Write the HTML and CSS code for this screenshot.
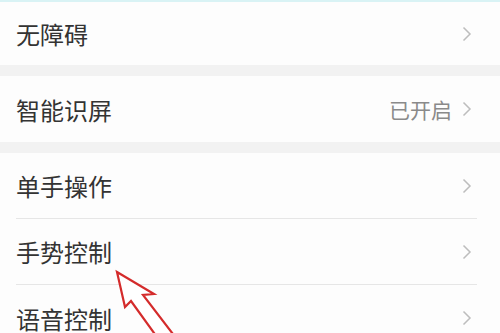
FILE: index.html
```html
<!DOCTYPE html>
<html lang="zh-CN">
<head>
    <meta charset="UTF-8">
    <meta name="viewport" content="width=device-width, initial-scale=1.0">
    <link rel="stylesheet" href="styles.css">
</head>
<body>
    <div class="screen">
        <div class="group first">
            <div class="row">
                <span class="label">无障碍</span>
                <span class="chevron"><svg width="10" height="16" viewBox="0 0 10 16"><polyline points="1.5,1.5 8,8 1.5,14.5" /></svg></span>
            </div>
        </div>
        <div class="group">
            <div class="row">
                <span class="label">智能识屏</span>
                <span class="value">已开启</span>
                <span class="chevron"><svg width="10" height="16" viewBox="0 0 10 16"><polyline points="1.5,1.5 8,8 1.5,14.5" /></svg></span>
            </div>
        </div>
        <div class="group">
            <div class="row">
                <span class="label">单手操作</span>
                <span class="chevron"><svg width="10" height="16" viewBox="0 0 10 16"><polyline points="1.5,1.5 8,8 1.5,14.5" /></svg></span>
            </div>
            <div class="row">
                <span class="label">手势控制</span>
                <span class="chevron"><svg width="10" height="16" viewBox="0 0 10 16"><polyline points="1.5,1.5 8,8 1.5,14.5" /></svg></span>
            </div>
            <div class="row">
                <span class="label">语音控制</span>
                <span class="chevron"><svg width="10" height="16" viewBox="0 0 10 16"><polyline points="1.5,1.5 8,8 1.5,14.5" /></svg></span>
            </div>
        </div>

        <svg class="pointer" width="500" height="333" viewBox="0 0 500 333">
            <polygon points="117,272 154,294 143,295 176,338 162,344 131,301 125,307" />
        </svg>
    </div>
</body>
</html>
```

FILE: styles.css
```css
body {
    margin: 0;
    padding: 0;
    background-color: #f2f2f2;
    font-family: "Noto Sans CJK SC", "Noto Sans", sans-serif;
}
.screen {
    position: relative;
    width: 500px;
    height: 333px;
    overflow: hidden;
    border-top: 2px solid #d9f3f5;
    box-sizing: border-box;
}
.group {
    background-color: #fdfdfd;
    margin-bottom: 11px;
}
.row {
    display: flex;
    align-items: center;
    height: 65px;
    margin: 0 23px 0 16px;
    border-bottom: 1px solid #e6e6e6;
}
.group .row:last-child {
    border-bottom: none;
    height: 66px;
}
.first .row:last-child {
    height: 63px;
}
.label {
    flex: 1;
    font-size: 24px;
    color: #333;
}
.value {
    font-size: 21px;
    color: #8a8a8a;
    margin-right: 10px;
}
.chevron {
    display: flex;
    align-items: center;
    margin-right: 5px;
}
.chevron polyline {
    fill: none;
    stroke: #bdbdbd;
    stroke-width: 1.5;
}
.pointer {
    position: absolute;
    left: 0;
    top: -2px;
}
.pointer polygon {
    fill: #ffffff;
    stroke: #d42b2b;
    stroke-width: 2.2;
    stroke-linejoin: miter;
}
```
